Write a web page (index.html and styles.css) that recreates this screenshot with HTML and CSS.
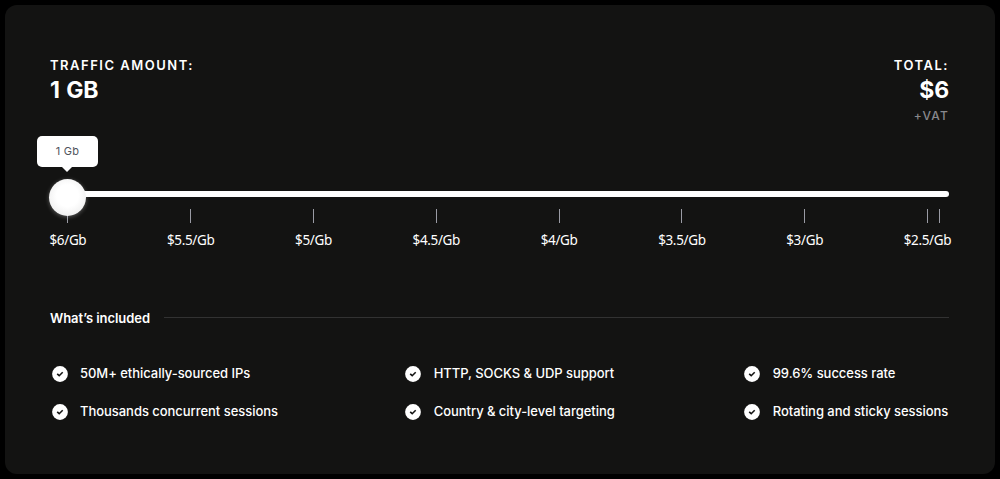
FILE: index.html
```
<!DOCTYPE html>
<html lang="en">
<head>
    <meta charset="UTF-8">
    <meta name="viewport" content="width=device-width, initial-scale=1.0">
    <title>Traffic pricing</title>
    <link rel="stylesheet" href="styles.css">
</head>

<body>
    <svg class="sprite" width="0" height="0">
        <symbol id="check" viewBox="0 0 16 16">
            <circle cx="8" cy="8" r="7.9" fill="#fff"/>
            <path d="M5.2 7.9l2 1.8 3.5-3.4" fill="none" stroke="#131312" stroke-width="1.6"/>
        </symbol>
    </svg>

    <div class="card">
        <div class="summary">
            <div class="amount">
                <div class="caption">TRAFFIC AMOUNT:</div>
                <div class="value">1 GB</div>
            </div>
            <div class="total">
                <div class="caption">TOTAL:</div>
                <div class="value">$6</div>
                <div class="vat">+VAT</div>
            </div>
        </div>

        <div class="slider">
            <div class="track"></div>
            <div class="handle">
                <div class="tooltip">1 Gb</div>
            </div>
        </div>

        <div class="scale">
            <div class="mark"><span>$6/Gb</span></div>
            <div class="mark"><span>$5.5/Gb</span></div>
            <div class="mark"><span>$5/Gb</span></div>
            <div class="mark"><span>$4.5/Gb</span></div>
            <div class="mark"><span>$4/Gb</span></div>
            <div class="mark"><span>$3.5/Gb</span></div>
            <div class="mark"><span>$3/Gb</span></div>
            <div class="mark"><span>$2.5/Gb</span></div>
            <div class="mark"></div>
        </div>

        <div class="included">What’s included</div>

        <div class="features">
            <ul>
                <li><svg class="icon"><use href="#check"/></svg><span>50M+ ethically-sourced IPs</span></li>
                <li><svg class="icon"><use href="#check"/></svg><span>Thousands concurrent sessions</span></li>
            </ul>
            <ul>
                <li><svg class="icon"><use href="#check"/></svg><span>HTTP, SOCKS &amp; UDP support</span></li>
                <li><svg class="icon"><use href="#check"/></svg><span>Country &amp; city-level targeting</span></li>
            </ul>
            <ul>
                <li><svg class="icon"><use href="#check"/></svg><span>99.6% success rate</span></li>
                <li><svg class="icon"><use href="#check"/></svg><span>Rotating and sticky sessions</span></li>
            </ul>
        </div>
    </div>
</body>
</html>
```
FILE: styles.css
```
* {
    box-sizing: border-box;
}

body {
    margin: 0;
    padding: 5px;
    height: 479px;
    background: #000;
    color: #fff;
    font-family: Inter, "Liberation Sans", sans-serif;
}

.sprite {
    position: absolute;
}

.card {
    height: 469px;
    padding: 50px 46px 0 45px;
    border-radius: 12px;
    background: #131312;
}

/* Top row */
.summary {
    display: flex;
    justify-content: space-between;
    height: 129px;
}

.caption {
    font-size: 13px;
    font-weight: 600;
    line-height: 20px;
    letter-spacing: 1.5px;
}

.value {
    font-size: 23px;
    font-weight: 700;
    line-height: 30px;
    letter-spacing: -0.1px;
    word-spacing: 1px;
}

.total {
    text-align: right;
}

.vat {
    font-size: 12px;
    font-weight: 500;
    line-height: 21px;
    letter-spacing: 1.2px;
    color: #88888c;
}

/* Slider */
.slider {
    position: relative;
    height: 25px;
    padding-top: 7px;
}

.track {
    height: 6px;
    border-radius: 3px;
    background: #fff;
}

.handle {
    position: absolute;
    left: -1px;
    top: -5px;
    width: 37px;
    height: 37px;
    border-radius: 50%;
    background: radial-gradient(circle at 50% 45%, #fff 40%, #f0f0f0 75%);
    box-shadow: 0 1px 4px rgba(255, 255, 255, 0.3);
}

.tooltip {
    position: absolute;
    left: -12px;
    bottom: 49px;
    width: 61px;
    height: 31px;
    border-radius: 5px;
    background: #fff;
    color: #50545c;
    font-size: 11px;
    line-height: 31px;
    letter-spacing: 0.2px;
    text-align: center;
}

.tooltip::after {
    content: "";
    position: absolute;
    left: 24px;
    top: 30px;
    border: 6px solid transparent;
    border-top: 6px solid #fff;
    border-bottom: 0;
}

.scale {
    display: grid;
    grid-template-columns: repeat(7, 122.8px) 12px 1px;
    height: 102px;
    padding-left: 17.4px;
}

.mark {
    display: flex;
    flex-direction: column;
    align-items: center;
    width: 1px;
    font-family: "Noto Sans", sans-serif;
    font-size: 13.5px;
    line-height: 18px;
    letter-spacing: -0.35px;
    white-space: nowrap;
}

.mark::before {
    content: "";
    width: 1px;
    height: 14px;
    margin-bottom: 8px;
    background: #9a9ba4;
}

/* Included features */
.included {
    display: flex;
    align-items: center;
    gap: 14px;
    height: 20px;
    margin-bottom: 36px;
    margin-top: -3px;
    font-size: 13px;
    font-weight: 600;
    letter-spacing: -0.06px;
}

.included::after {
    content: "";
    flex: 1;
    height: 1px;
    margin-top: -1px;
    background: #323232;
}

.features {
    display: grid;
    grid-template-columns: 353px 339px auto;
    padding-left: 2px;
    white-space: nowrap;
}

.features ul {
    margin: 0;
    padding: 0;
    list-style: none;
}

.features li {
    display: flex;
    align-items: center;
    gap: 12px;
    height: 20px;
    margin-bottom: 18px;
    font-size: 13px;
    font-weight: 500;
    letter-spacing: -0.04px;
}

.features ul + ul li {
    gap: 12.7px;
}

.features span {
    padding-bottom: 2px;
}

.icon {
    width: 16px;
    height: 16px;
}
```
